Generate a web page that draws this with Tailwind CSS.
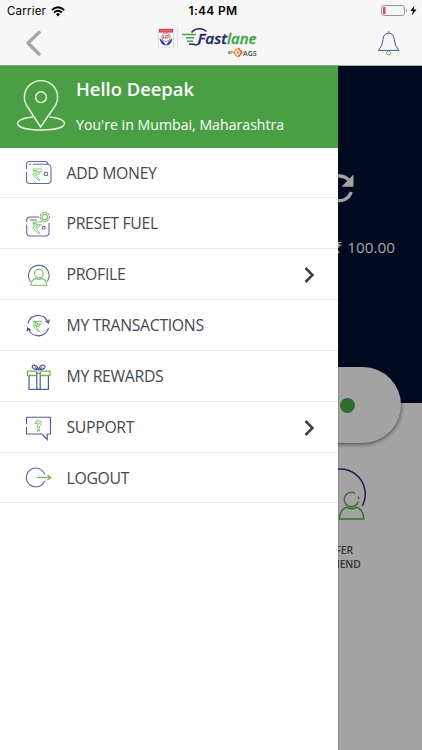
<!DOCTYPE html>
<html lang="en">
<head>
<meta charset="utf-8">
<meta name="viewport" content="width=device-width, initial-scale=1">
<title>Fastlane</title>
<script src="https://cdn.jsdelivr.net/npm/@tailwindcss/browser@4"></script>
</head>
<body class="font-['Open_Sans',sans-serif]">
<div class="w-[422px] h-[750px] overflow-hidden flex flex-col bg-[#a3a3a3]">
  <header class="h-[66px] shrink-0 bg-[#f7f7f7] border-b border-[#9cb59a] flex flex-col">
    <div class="h-[22px] grid grid-cols-3 items-center px-[7px] text-black font-['Inter',sans-serif]">
      <div class="flex items-center gap-[5px] pt-[1px]">
        <span class="text-[11.5px] leading-none tracking-[0.2px]">Carrier</span>
        <svg class="w-[14px] h-[11px]" viewBox="0 0 14 11" fill="none" stroke="#000" stroke-width="1.9"><path d="M.8 4.1Q7-1.6 13.2 4.1M3.1 6.5Q7 3 10.9 6.5"/><path d="M4.8 8.1Q7 6.2 9.2 8.1L7 10.4Z" fill="#000" stroke="none"/></svg>
      </div>
      <span class="text-center text-[12px] leading-none font-semibold tracking-[0.3px] pl-[4px]">1:44 PM</span>
      <div class="flex justify-end items-center -mr-[3px]">
        <svg class="w-[38px] h-[14px]" viewBox="380 4 38 14"><rect x="381.5" y="5.5" width="23" height="10" rx="2.5" fill="none" stroke="#969696"/><rect x="383" y="7" width="2.5" height="7" rx=".5" fill="#ee4545"/><path d="M406 8.7Q408 10.5 406 12.3Z" fill="#969696"/><path d="M414.5 5.5L410.5 11H413L411.8 15.5L416.5 9.6H413.6Z"/></svg>
      </div>
    </div>
    <div class="h-[43px] flex items-start">
      <svg class="w-[60px] h-[43px]" viewBox="0 22 60 43" fill="none" stroke="#a8a8a8" stroke-width="3.6" stroke-linecap="round" stroke-linejoin="round"><path d="M39 32.5L28 43L39 54"/></svg>
      <svg class="w-[110px] h-[43px] ml-[93px]" viewBox="153 22 110 43">
        <rect x="158.3" y="28.5" width="15" height="18.5" fill="#fff" stroke="#cbd0dc" stroke-width=".7"/>
        <rect x="159" y="29" width="14" height="3.6" fill="#dc3d45"/>
        <path d="M160.2 30.8H171.8" stroke="#f2b4b5" stroke-width=".8" stroke-dasharray="1 .5"/>
        <path d="M159.5 38Q160.5 45.6 166 45.6T172.5 38L169 41L166 45L163 41Z" fill="#3a4a9c"/>
        <circle cx="166" cy="37.2" r="4.2" fill="#fff" stroke="#6873b0" stroke-width=".8"/>
        <text x="166" y="39" font-family="Liberation Sans" font-weight="700" font-size="5" text-anchor="middle" fill="#dc3d45">HP</text>
        <path d="M177.5 28V49" stroke="#e2e2e2"/>
        <g fill="none" stroke-width="1.5"><path d="M182 34.5H196M186 37.8H194M187 41.2H193" stroke="#43a447"/><path d="M189 44.2H195" stroke="#1d2d61"/><path d="M191.5 32.4Q195.5 28 201 28.8Q205 29.6 206.5 31.6" stroke="#1d2d61"/></g>
        <g font-family="Open Sans" font-size="15.2" font-weight="600" font-style="italic"><text x="197.5" y="43.8" textLength="29.5" lengthAdjust="spacingAndGlyphs" fill="#1d2d61" stroke="#1d2d61" stroke-width=".3">Fast</text><text x="227" y="43.8" textLength="29.5" lengthAdjust="spacingAndGlyphs" fill="#43a447" stroke="#43a447" stroke-width=".3">lane</text></g>
        <path d="M194.5 45Q198.5 45.5 200 41" stroke="#1d2d61" stroke-width="1.4" fill="none"/>
        <text x="228" y="54" font-family="Open Sans" font-size="3.6" font-weight="700" fill="#555">BY</text>
        <path d="M237 48.5L233.8 52.5L237 56.5" fill="none" stroke="#f3a12d" stroke-width="1.7"/><path d="M238 48L242 52.5L238 57" fill="none" stroke="#e35b2a" stroke-width="1.7"/><circle cx="237.8" cy="52.5" r="1.2" fill="#e8722b"/>
        <text x="243" y="55.6" font-family="Open Sans" font-size="7" font-weight="600" textLength="13.6" lengthAdjust="spacingAndGlyphs" fill="#3d3d45">AGS</text>
      </svg>
      <svg class="w-[30px] h-[43px] ml-[111px]" viewBox="374 22 30 43" fill="none"><path d="M378.3 50.4H399Q394.8 46.5 394.2 39.5Q393.8 33.2 388.6 33.2T383.1 39.5Q382.5 46.5 378.3 50.4Z" stroke="#4b5590" stroke-width="1"/><path d="M388.6 31V33" stroke="#6eb45a" stroke-width="1.4"/><circle cx="388.6" cy="53" r="2" stroke="#6eb45a"/></svg>
    </div>
  </header>

  <div class="relative flex-1 flex flex-col">
    <section class="h-[337px] shrink-0 bg-[#000a20] flex flex-col items-end text-[#a8a8a8]">
      <svg class="w-[34px] h-[30px] shrink-0 mt-[107px] mr-[67px]" viewBox="321 173 34 30" fill="none"><path d="M348.8 180.3A12.3 12.3 0 1 0 351.2 192" stroke="#a3a3a3" stroke-width="3.3"/><path d="M353.5 174.5V186.7H341.5Z" fill="#a3a3a3"/></svg>
      <p class="mt-[32px] mr-[27px] text-[15.3px] leading-[24px] shrink-0 whitespace-nowrap">₹ 100.00</p>
      <div class="mt-[108px] mr-[21px] w-[358px] h-[76px] shrink-0 rounded-full bg-[#a3a3a3] shadow-[0_1px_4px_rgba(0,0,0,0.6)] flex items-center justify-end pr-[46px]">
        <span class="size-[15px] rounded-full bg-[#2f6b2d]"></span>
      </div>
    </section>
    <section class="flex-1 flex flex-col items-end">
      <svg class="w-[60px] h-[54px] mt-[64px] mr-[52px]" viewBox="310 467 60 54" fill="none" stroke-width="1.5"><path d="M319.5 508A25 25 0 1 1 362.3 505.8" stroke="#1b1e57"/><path d="M355 493.3A7.2 7.2 0 1 0 358.3 501.5M358.2 496.6A7 7 0 0 1 358.6 499.3" stroke="#36762b"/><path d="M339.5 519H363.7Q363.5 509.5 356.7 507.3Q351.6 510.2 346.5 507.3Q339.7 509.5 339.5 519Z" stroke="#36762b"/></svg>
      <p class="w-[76px] mt-[23px] mr-[46px] text-center text-[10.2px] font-semibold leading-[13.5px] text-[#303239] whitespace-nowrap">REFER<br>A FRIEND</p>
    </section>

    <aside class="absolute left-0 top-0 w-[337.5px] h-full bg-white shadow-[0_0_1px_#333] flex flex-col">
      <div class="h-[81.5px] shrink-0 bg-[#4a9f44] text-white flex">
        <svg class="w-[76px] h-[81px] shrink-0" viewBox="0 66 76 81" fill="none" stroke="#eff9ea" stroke-width="1.4"><path d="M40.6 127L28 107.5A16.6 16.6 0 1 1 54 107.5Z"/><circle cx="41" cy="97.2" r="5.4"/><path d="M33 117C12 118.5 10.5 129.8 41 130S70 118.5 49.5 117"/></svg>
        <div class="flex flex-col whitespace-nowrap">
          <h1 class="mt-[10px] text-[18.4px] leading-[26px] font-semibold">Hello Deepak</h1>
          <p class="mt-[12px] text-[14.15px] leading-[22px]">You're in Mumbai, Maharashtra</p>
        </div>
      </div>
      <nav class="flex flex-col text-[15.8px] tracking-[-0.32px] text-[#45484e] whitespace-nowrap">
        <a class="h-[50px] flex items-center border-b border-[#ebebeb]">
          <svg class="w-[66.5px] h-[50px]" viewBox="0 147 66.5 50" fill="none" stroke="#6068a2" stroke-width="1.1"><path d="M26.5 169V164.5Q26.5 161.5 30 161.5H45Q48 161.5 48 165M29 164.3H31M33 164.3H47Q51 164.3 51 168.3V180Q51 183.5 47.5 183.5H30Q26.5 183.5 26.5 180V172"/><circle cx="46" cy="174" r="1.8"/><g id="rupee"><path d="M33 169H42M33 171.8H42M33 169V170.5H36.5Q39 171.8 36.5 173.8H33V175.3L38 180.3H40L35.7 175.3Q39.5 175.3 40 171.8" stroke="#82bf68" stroke-width=".9"/></g></svg>
          <span class="pt-[3px]">ADD MONEY</span>
        </a>
        <a class="h-[51px] flex items-center border-b border-[#ebebeb]">
          <svg class="w-[66.5px] h-[50px]" viewBox="0 198 66.5 50" fill="none" stroke="#6068a2" stroke-width="1.1"><path d="M39 217H30Q26.7 217 26.7 220.5V222M26.7 224.5V232.5Q26.7 236 30 236H45.5Q49 236 49 232.5V223M30 220H37"/><circle cx="43.7" cy="227.7" r="1.5"/><use href="#rupee" y="53"/><g stroke="#82bf68"><circle cx="44.8" cy="217" r="2.7"/><circle cx="44.8" cy="217" r="4.6" stroke-width="1.3" stroke-dasharray="2.4 .6"/></g></svg>
          <span class="pt-[3px]">PRESET FUEL</span>
        </a>
        <a class="h-[51px] flex items-center border-b border-[#ebebeb]">
          <svg class="w-[66.5px] h-[50px]" viewBox="0 249 66.5 50" fill="none" stroke="#6068a2" stroke-width="1.1"><path d="M30.3 281.5A10.4 10.4 0 1 1 47.3 281.5"/><g stroke="#75b75b"><circle cx="38.8" cy="273.5" r="4.3"/><path d="M31 285.3H46.6Q46.6 279.6 41.7 278.4Q38.8 280 35.9 278.4Q31 279.6 31 285.3Z"/></g></svg>
          <span class="pt-[3px]">PROFILE</span>
          <svg class="w-[14px] h-[20px] ml-auto mt-[2px] mr-[21.5px]" viewBox="302 265 14 20" fill="none" stroke="#3d4045" stroke-width="2.5"><path d="M305.5 268L312.5 275L305.5 282"/></svg>
        </a>
        <a class="h-[51px] flex items-center border-b border-[#ebebeb]">
          <svg class="w-[66.5px] h-[50px]" viewBox="0 300 66.5 50" fill="none" stroke="#4a5389" stroke-width="1.1"><path d="M28 323.5A10.5 10.5 0 0 1 47.7 321.5M48.5 328A10.5 10.5 0 0 1 28.5 329M30 318.6L32 316.8" /><path d="M45.5 321L48.5 323L49.3 319.5M30.7 330L27.7 328L27 331.3" stroke-width="1.3"/><path d="M33.7 321.4H42.3M33.7 324H42.3M33.7 321.4V322.8H37Q39 324 37 325.5H33.7V327L38 331.3H39.6L36 327Q39.5 327 40 324" stroke="#75b75b" stroke-width=".9"/></svg>
          <span class="pt-[3px]">MY TRANSACTIONS</span>
        </a>
        <a class="h-[51px] flex items-center border-b border-[#ebebeb]">
          <svg class="w-[66.5px] h-[50px]" viewBox="0 351 66.5 50" fill="none" stroke="#4d5994" stroke-width="1.2"><path d="M29 376V389.3H48.4V376M36.8 371.5V389M40.2 371.5V389M38.5 370C31 370 31 364.5 34.5 365.2Q37.5 366 38.5 370C39.5 366 42 364.5 43.8 365.2C47 367 44 370 38.5 370M35 367.5L37 369M42 367.5L40 369"/><path d="M36.5 371.2H27.5V375.5H36.5M40.5 371.2H50V375.5H40.5M37 373.3H40" stroke="#70b553" stroke-width="1.3"/></svg>
          <span class="pt-[3px]">MY REWARDS</span>
        </a>
        <a class="h-[51px] flex items-center border-b border-[#ebebeb]">
          <svg class="w-[66.5px] h-[50px]" viewBox="0 402 66.5 50" fill="none" stroke="#4d5994" stroke-width="1.1"><path d="M26.5 424V417.3H50.5V434H47.2V439.5L42 434H26.5V427"/><path d="M35.2 423.4Q35.2 420.5 38.3 420.5T41.3 423.5Q41.2 425 39.5 426.2V428H37.4V425Q39.3 424.2 39.3 423.1Q38.3 421.5 37 423.4ZM37.5 429.7H39.4V431.2H37.5Z" stroke="#75b75b" stroke-width=".9"/></svg>
          <span class="pt-[3px]">SUPPORT</span>
          <svg class="w-[14px] h-[20px] ml-auto mt-[2px] mr-[21.5px]" viewBox="302 265 14 20" fill="none" stroke="#3d4045" stroke-width="2.5"><path d="M305.5 268L312.5 275L305.5 282"/></svg>
        </a>
        <a class="h-[50px] flex items-center border-b border-[#ebebeb]">
          <svg class="w-[66.5px] h-[50px]" viewBox="0 453 66.5 50" fill="none" stroke="#6068a2" stroke-width="1.1"><path d="M44.6 475.3A9.4 9.4 0 1 0 44.6 481.7"/><path d="M37 478.5H50.5M47.5 476L50.7 478.5L47.5 481" stroke="#6bb550" stroke-width="1.2"/></svg>
          <span class="pt-[3px]">LOGOUT</span>
        </a>
      </nav>
    </aside>
  </div>
</div>
</body>
</html>
